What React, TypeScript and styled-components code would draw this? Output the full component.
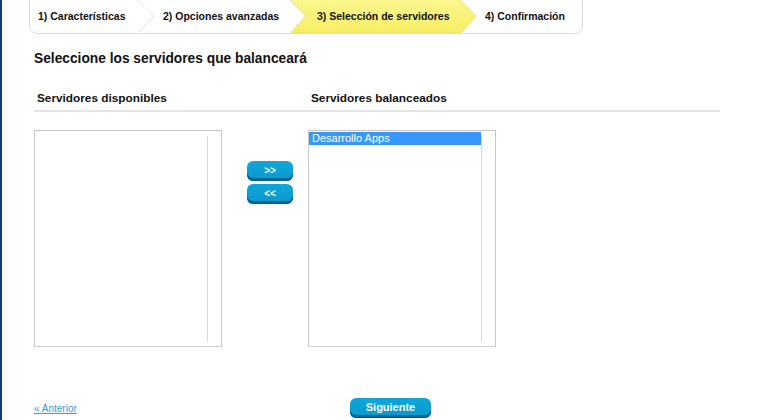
import React from "react";
import styled, { createGlobalStyle } from "styled-components";

const Global = createGlobalStyle`
  html, body { margin: 0; padding: 0; background: #fff; }
  body { font-family: "Liberation Sans", Arial, sans-serif; color: #222; }
`;

const Page = styled.div`
  width: 770px;
  height: 420px;
  box-sizing: border-box;
  border-left: 2px solid #123f6e;
  overflow: hidden;
  display: flex;
  flex-direction: column;
`;

const Wizard = styled.div`
  margin: -6px 0 0 27px;
  width: 554px;
  height: 40px;
  box-sizing: border-box;
  border: 1px solid #dcdcdc;
  border-radius: 8px;
  display: flex;
  align-items: flex-end;
  overflow: hidden;
`;

const Step = styled.div<{ $w: number; $pad: number; $active?: boolean }>`
  position: relative;
  flex: none;
  width: ${(p) => p.$w}px;
  height: 34px;
  box-sizing: border-box;
  padding-left: ${(p) => p.$pad}px;
  display: flex;
  align-items: center;
  z-index: ${(p) => (p.$active ? 2 : 1)};
`;

const StepShape = styled.svg`
  position: absolute;
  left: 0;
  top: 0;
  overflow: visible;
`;

const StepLabel = styled.span`
  position: relative;
  font-size: 10.5px;
  font-weight: bold;
  color: #111;
  white-space: nowrap;
`;

const Content = styled.div`
  padding: 0 0 0 32px;
  display: flex;
  flex-direction: column;
`;

const Title = styled.h2`
  margin: 17px 0 0;
  font-size: 13.75px;
  font-weight: bold;
  color: #111;
  line-height: 16px;
`;

const HeaderRow = styled.div`
  margin-top: 24px;
  width: 686px;
  display: grid;
  grid-template-columns: 274px 1fr;
  border-bottom: 2px solid #e4e4e4;
  padding-bottom: 5px;
`;

const ColHeader = styled.div`
  padding-left: 3px;
  font-size: 11.8px;
  font-weight: bold;
  color: #111;
  line-height: 14px;
`;

const Lists = styled.div`
  margin-top: 18px;
  display: grid;
  grid-template-columns: 188px 25px 46px 15px 188px;
`;

const ListBox = styled.div<{ $col: number }>`
  grid-column: ${(p) => p.$col};
  height: 217px;
  box-sizing: border-box;
  border: 1px solid #c8c8c8;
  border-bottom-color: #d4d4d4;
  padding: 1px 0 0 0;
  display: flex;
`;

const ListItems = styled.div`
  flex: 1;
  display: flex;
  flex-direction: column;
`;

const ListTrack = styled.div`
  flex: none;
  width: 13px;
  margin: 4px 0 4px 0;
  border-left: 1px solid #d8d8d8;
`;

const ListItem = styled.div<{ $selected?: boolean }>`
  height: 13px;
  line-height: 13px;
  padding-left: 3px;
  font-size: 11px;
  color: ${(p) => (p.$selected ? "#fff" : "#222")};
  background: ${(p) => (p.$selected ? "#3797fd" : "transparent")};
`;

const MoveButtons = styled.div`
  grid-column: 3;
  display: flex;
  flex-direction: column;
  gap: 3px;
  padding-top: 31px;
`;

const BlueButton = styled.button<{ $w: number }>`
  width: ${(p) => p.$w}px;
  height: 20px;
  box-sizing: border-box;
  padding: 0 0 2px;
  border: none;
  border-radius: 6px;
  background: linear-gradient(#12a6d8, #0899cd);
  box-shadow: inset 0 -3px 0 #06628c;
  color: #fff;
  font-family: "Liberation Sans", Arial, sans-serif;
  font-weight: bold;
  font-size: ${(p) => (p.$w > 60 ? 11 : 10)}px;
  cursor: pointer;
`;

const Footer = styled.div`
  margin-top: 51px;
  display: flex;
  align-items: center;
`;

const BackLink = styled.a`
  width: 316px;
  font-size: 10px;
  color: #2d9ed6;
  text-decoration: underline;
  cursor: pointer;
`;

type StepDef = { label: string; w: number; pad: number; active?: boolean; last?: boolean };

const steps: StepDef[] = [
  { label: "1) Características", w: 108, pad: 8 },
  { label: "2) Opciones avanzadas", w: 152, pad: 25 },
  { label: "3) Selección de servidores", w: 169, pad: 27, active: true },
  { label: "4) Confirmación", w: 125, pad: 26, last: true },
];

function StepItem({ s }: { s: StepDef }) {
  const w = s.w;
  return (
    <Step $w={w} $pad={s.pad} $active={s.active}>
      {s.active ? (
        <StepShape width={w} height={34}>
          <defs>
            <linearGradient id="yl" x1="0" y1="0" x2="0" y2="1">
              <stop offset="0" stopColor="#fbf78f" />
              <stop offset="1" stopColor="#f7ee62" />
            </linearGradient>
          </defs>
          <polygon
            points={`0,0 ${w},0 ${w + 17},17 ${w + 2},34 1,34 16,17`}
            fill="url(#yl)"
            stroke="#eee27a"
            strokeWidth="1"
          />
        </StepShape>
      ) : !s.last ? (
        <StepShape width={w} height={34}>
          <polyline
            points={`${w - 2},0 ${w + 16},17 ${w},34`}
            fill="none"
            stroke="#d6d6d6"
            strokeWidth="1"
            strokeDasharray="2 1"
          />
        </StepShape>
      ) : null}
      <StepLabel>{s.label}</StepLabel>
    </Step>
  );
}

export default function App() {
  return (
    <>
      <Global />
      <Page>
        <Wizard>
          {steps.map((s) => (
            <StepItem key={s.label} s={s} />
          ))}
        </Wizard>
        <Content>
          <Title>Seleccione los servidores que balanceará</Title>
          <HeaderRow>
            <ColHeader>Servidores disponibles</ColHeader>
            <ColHeader>Servidores balanceados</ColHeader>
          </HeaderRow>
          <Lists>
            <ListBox $col={1}>
              <ListItems />
              <ListTrack />
            </ListBox>
            <MoveButtons>
              <BlueButton $w={46}>&gt;&gt;</BlueButton>
              <BlueButton $w={46}>&lt;&lt;</BlueButton>
            </MoveButtons>
            <ListBox $col={5}>
              <ListItems>
                <ListItem $selected>Desarrollo Apps</ListItem>
              </ListItems>
              <ListTrack />
            </ListBox>
          </Lists>
          <Footer>
            <BackLink>« Anterior</BackLink>
            <BlueButton $w={81}>Siguiente</BlueButton>
          </Footer>
        </Content>
      </Page>
    </>
  );
}
